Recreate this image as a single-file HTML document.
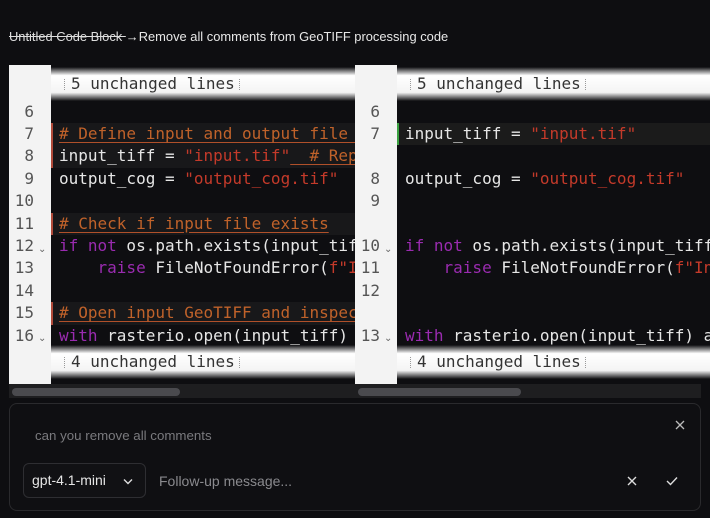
<!DOCTYPE html>
<html><head><style>
*{margin:0;padding:0;box-sizing:border-box}
body{width:710px;height:518px;background:#0e0e11;position:relative;overflow:hidden;font-family:"Liberation Sans",sans-serif}
.title{position:absolute;left:9px;top:29px;font-size:12.9px;color:#e8e8e8;white-space:nowrap}
.title s{color:#ddd}
.g{position:absolute;top:65px;height:319px;background:#f3f3f3}
.c{position:absolute;top:65px;height:319px;background:#0e0e11;overflow:hidden}
.row{position:absolute;left:0;right:0;height:22.4px;line-height:22.4px;font-family:"DejaVu Sans Mono","Liberation Mono",monospace;font-size:16px;color:#e6e6e6;white-space:pre;padding-left:8px}
.num{position:absolute;height:22.4px;line-height:22.4px;font-family:"DejaVu Sans Mono",monospace;font-size:16px;color:#555;text-align:right;width:25px}
.chev{position:absolute;font-size:10px;color:#666;font-family:"DejaVu Sans",sans-serif}
.del{background:#18181a;border-left:2px solid #b04a3a;padding-left:6px}
.add{background:#1b1b1b;border-left:2px solid #3aa040;padding-left:6px}
.cm{color:#c0622a;text-decoration:underline;text-decoration-color:#b0502a;text-underline-offset:3px}
.s{color:#c43a2a}
.k{color:#9a2bb0}
.bar{position:absolute;left:0;right:0;height:34px;background:linear-gradient(#0e0e11 0%,#fff 25%,#f4f4f4 75%,#0e0e11 100%);font-family:"DejaVu Sans Mono",monospace;font-size:16px;color:#333;line-height:34px;padding-left:9px;white-space:pre}
.bar i{display:inline-block;width:1px;height:11px;border-left:1px dotted #999;margin:0 6px 0 4px;vertical-align:-1px}
.bar i+i{}
.sb{position:absolute;top:384px;height:14px;background:#1e1e20}
.th{position:absolute;top:388px;height:8px;border-radius:4px;background:#4a4a4e}
.chat{position:absolute;left:9px;top:403px;width:692px;height:108px;border:1px solid #2a2a2d;border-radius:8px;background:#0f0f12}
</style></head><body>
<div class="title"><s>Untitled Code Block </s>→Remove all comments from GeoTIFF processing code</div>

<!-- left -->
<div class="g" style="left:9px;width:42px">
<div class="num" style="left:0;top:35.6px">6</div>
<div class="num" style="left:0;top:58px">7</div>
<div class="num" style="left:0;top:80.4px">8</div>
<div class="num" style="left:0;top:102.8px">9</div>
<div class="num" style="left:0;top:125.2px">10</div>
<div class="num" style="left:0;top:147.6px">11</div>
<div class="num" style="left:0;top:170px">12</div><div class="chev" style="left:29px;top:179px">⌄</div>
<div class="num" style="left:0;top:192.4px">13</div>
<div class="num" style="left:0;top:214.8px">14</div>
<div class="num" style="left:0;top:237.2px">15</div>
<div class="num" style="left:0;top:259.6px">16</div><div class="chev" style="left:29px;top:268px">⌄</div>
</div>
<div class="c" style="left:51px;width:304px">
<div class="bar" style="top:2px"><i></i>5 unchanged lines<i></i></div>
<div class="row del" style="top:58px"><span class="cm"># Define input and output file paths</span></div>
<div class="row del" style="top:80.4px">input_tiff = <span class="s">"input.tif"</span><span class="cm">  # Replace</span></div>
<div class="row" style="top:102.8px">output_cog = <span class="s">"output_cog.tif"</span></div>
<div class="row del" style="top:147.6px"><span class="cm"># Check if input file exists</span></div>
<div class="row" style="top:170px"><span class="k">if not</span> os.path.exists(input_tiff):</div>
<div class="row" style="top:192.4px">    <span class="k">raise</span> FileNotFoundError(<span class="s">f"Input</span></div>
<div class="row del" style="top:237.2px"><span class="cm"># Open input GeoTIFF and inspect</span></div>
<div class="row" style="top:259.6px"><span class="k">with</span> rasterio.open(input_tiff) as</div>
<div class="bar" style="top:280px"><i></i>4 unchanged lines<i></i></div>
</div>

<!-- right -->
<div class="g" style="left:355px;width:42px">
<div class="num" style="left:0;top:35.6px">6</div>
<div class="num" style="left:0;top:58px">7</div>
<div class="num" style="left:0;top:102.8px">8</div>
<div class="num" style="left:0;top:125.2px">9</div>
<div class="num" style="left:0;top:170px">10</div><div class="chev" style="left:29px;top:179px">⌄</div>
<div class="num" style="left:0;top:192.4px">11</div>
<div class="num" style="left:0;top:214.8px">12</div>
<div class="num" style="left:0;top:259.6px">13</div><div class="chev" style="left:29px;top:268px">⌄</div>
</div>
<div class="c" style="left:397px;width:313px">
<div class="bar" style="top:2px"><i></i>5 unchanged lines<i></i></div>
<div class="row add" style="top:58px">input_tiff = <span class="s">"input.tif"</span></div>
<div class="row" style="top:102.8px">output_cog = <span class="s">"output_cog.tif"</span></div>
<div class="row" style="top:170px"><span class="k">if not</span> os.path.exists(input_tiff):</div>
<div class="row" style="top:192.4px">    <span class="k">raise</span> FileNotFoundError(<span class="s">f"Input</span></div>
<div class="row" style="top:259.6px"><span class="k">with</span> rasterio.open(input_tiff) as</div>
<div class="bar" style="top:280px"><i></i>4 unchanged lines<i></i></div>
</div>

<div class="sb" style="left:9px;width:346px"></div>
<div class="sb" style="left:355px;width:346px"></div>
<div class="th" style="left:12px;width:168px"></div>
<div class="th" style="left:358px;width:163px"></div>

<div class="chat">
<div style="position:absolute;left:25px;top:24px;font-size:13.3px;color:#7a7a7e">can you remove all comments</div>
<svg style="position:absolute;left:665px;top:16px" width="10" height="10" viewBox="0 0 10 10"><path d="M1 1L9 9M9 1L1 9" stroke="#bbb" stroke-width="1.3"/></svg>
<div style="position:absolute;left:13px;top:59px;width:123px;height:35px;border:1px solid #2e2e32;border-radius:6px;background:#111114">
<span style="position:absolute;left:8px;top:8px;font-size:14px;color:#e6e6e6">gpt-4.1-mini</span>
<svg style="position:absolute;left:99px;top:14px" width="10" height="7" viewBox="0 0 10 7"><path d="M1 1.5L5 5.5L9 1.5" stroke="#ddd" stroke-width="1.4" fill="none"/></svg>
</div>
<div style="position:absolute;left:149px;top:69px;font-size:14px;color:#8a8a8e">Follow-up message...</div>
<svg style="position:absolute;left:617px;top:72px" width="10" height="10" viewBox="0 0 10 10"><path d="M1 1L9 9M9 1L1 9" stroke="#ddd" stroke-width="1.4"/></svg>
<svg style="position:absolute;left:656px;top:72px" width="12" height="10" viewBox="0 0 12 10"><path d="M1 5L4.5 8.5L11 1.5" stroke="#ddd" stroke-width="1.4" fill="none"/></svg>
</div>
</body></html>
